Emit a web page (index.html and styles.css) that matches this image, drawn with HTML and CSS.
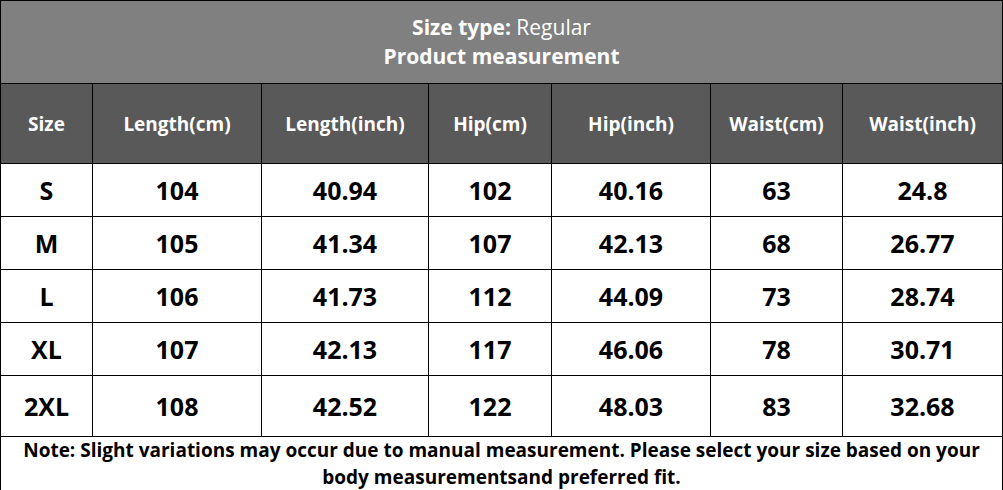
FILE: index.html
```html
<!DOCTYPE html>
<html>
<head>
<meta charset="utf-8">
<link rel="stylesheet" href="styles.css">
</head>
<body>
<table class="chart">
  <colgroup>
    <col class="c1"><col class="c2"><col class="c3"><col class="c4"><col class="c5"><col class="c6"><col class="c7">
  </colgroup>
  <tr class="title-row">
    <td colspan="7"><div><b>Size type:</b> Regular</div><div><b>Product measurement</b></div></td>
  </tr>
  <tr class="head-row">
    <th>Size</th><th>Length(cm)</th><th>Length(inch)</th><th>Hip(cm)</th><th>Hip(inch)</th><th>Waist(cm)</th><th>Waist(inch)</th>
  </tr>
  <tr class="data-row"><td>S</td><td>104</td><td>40.94</td><td>102</td><td>40.16</td><td>63</td><td>24.8</td></tr>
  <tr class="data-row"><td>M</td><td>105</td><td>41.34</td><td>107</td><td>42.13</td><td>68</td><td>26.77</td></tr>
  <tr class="data-row"><td>L</td><td>106</td><td>41.73</td><td>112</td><td>44.09</td><td>73</td><td>28.74</td></tr>
  <tr class="data-row"><td>XL</td><td>107</td><td>42.13</td><td>117</td><td>46.06</td><td>78</td><td>30.71</td></tr>
  <tr class="data-row tall"><td>2XL</td><td>108</td><td>42.52</td><td>122</td><td>48.03</td><td>83</td><td>32.68</td></tr>
  <tr class="note-row">
    <td colspan="7">Note: Slight variations may occur due to manual measurement. Please select your size based on your body measurementsand preferred fit.</td>
  </tr>
</table>
</body>
</html>
```
FILE: styles.css
```css
html, body {
  margin: 0;
  padding: 0;
  background: #ffffff;
}
.chart {
  border-collapse: collapse;
  table-layout: fixed;
  width: 1002px;
  font-family: "Open Sans", "Noto Sans", sans-serif;
  color: #000;
}
.c1 { width: 92px; }
.c2 { width: 169px; }
.c3 { width: 167px; }
.c4 { width: 123px; }
.c5 { width: 159px; }
.c6 { width: 132px; }
.c7 { width: 160px; }
.chart td, .chart th {
  border: 1px solid #000;
  text-align: center;
  vertical-align: middle;
  padding: 0;
}
.title-row td {
  background: #808080;
  color: #fff;
  height: 82px;
  font-size: 21px;
  line-height: 29px;
  font-weight: 400;
}
.title-row b { font-weight: 700; }
.head-row th {
  background: #595959;
  color: #fff;
  height: 79px;
  font-size: 19px;
  font-weight: 700;
}
.data-row td {
  height: 52px;
  font-size: 25px;
  font-weight: 700;
}
.data-row.tall td { height: 60px; }
.note-row td {
  height: 51px;
  font-size: 19px;
  font-weight: 700;
  line-height: 27px;
  padding: 0 6px;
}
```
